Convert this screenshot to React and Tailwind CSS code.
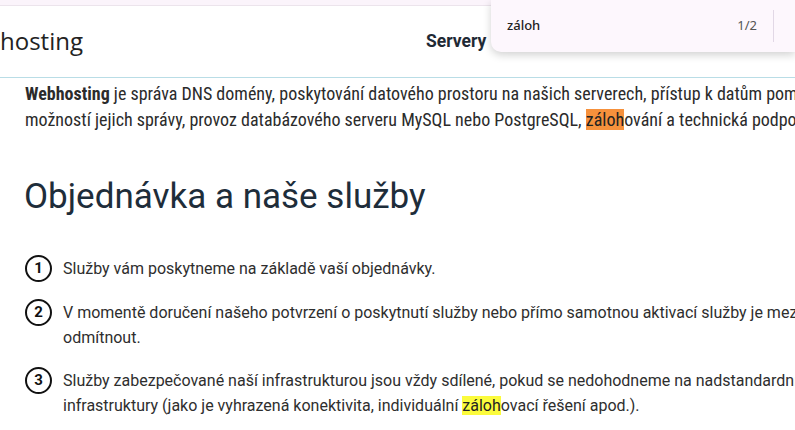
const items = [
  { n: 1, lines: ['Služby vám poskytneme na základě vaší objednávky.'] },
  {
    n: 2,
    lines: [
      'V momentě doručení našeho potvrzení o poskytnutí služby nebo přímo samotnou aktivací služby je mezi námi uzavřena smlouva, kterou nelze',
      'odmítnout.',
    ],
  },
]

export default function App() {
  return (
    <div className="relative w-[795px] h-[430px] overflow-hidden bg-white" style={{ fontFamily: 'Roboto, sans-serif' }}>
      {/* browser strip */}
      <div className="h-[6px] bg-[#fbf4fb] border-b border-[#ece4ec]" />

      {/* Header */}
      <header className="h-[72px] flex items-center border-b border-[#b9dde6]">
        <div className="w-[426px] text-[24px] text-[#222] leading-none pb-[2px]" style={{ fontFamily: '"Open Sans", sans-serif' }}>
          hosting
        </div>
        <div className="text-[17.5px] font-bold text-[#1f2a35]">Servery</div>
      </header>

      {/* Intro */}
      <div className="pl-[25px] pt-[3px] text-[18px] leading-[26px] text-[#2b2b2b] whitespace-nowrap"
        style={{ fontFamily: '"Liberation Sans Narrow", "Roboto Condensed", Roboto, sans-serif' }}>
        <p><b>Webhosting</b> je správa DNS domény, poskytování datového prostoru na našich serverech, přístup k datům pomocí FTP a SSH</p>
        <p>možností jejich správy, provoz databázového serveru MySQL nebo PostgreSQL, <mark className="bg-[#f6913c] text-[#222]">záloh</mark>ování a technická podpora.</p>
      </div>

      <h1 className="pl-[24px] mt-[42px] text-[35px] leading-[44px] text-[#1e2d3a]">Objednávka a naše služby</h1>

      <ol className="pl-[25px] mt-[37px] flex flex-col gap-[18px] text-[16px] leading-[25px] text-[#2e2e2e] whitespace-nowrap">
        {items.map(it => (
          <li key={it.n} className="flex gap-[11px]">
            <span className="shrink-0 w-[27px] h-[27px] -mt-[1px] rounded-full border-2 border-[#111] flex items-center justify-center text-[15px] font-bold text-[#111]">{it.n}</span>
            <div>
              {it.lines.map(l => <div key={l}>{l}</div>)}
            </div>
          </li>
        ))}
        <li className="flex gap-[11px]">
          <span className="shrink-0 w-[27px] h-[27px] -mt-[1px] rounded-full border-2 border-[#111] flex items-center justify-center text-[15px] font-bold text-[#111]">3</span>
          <div>
            <div>Služby zabezpečované naší infrastrukturou jsou vždy sdílené, pokud se nedohodneme na nadstandardním řešení</div>
            <div>infrastruktury (jako je vyhrazená konektivita, individuální <mark className="bg-[#fbfb3c] text-[#222]">záloh</mark>ovací řešení apod.).</div>
          </div>
        </li>
      </ol>

      {/* Find bar */}
      <div className="absolute top-0 left-[491px] right-0 h-[52px] bg-[#fdf7fd] rounded-bl-[10px] shadow-[0_3px_8px_rgba(0,0,0,0.18)] flex items-center"
        style={{ fontFamily: '"Noto Sans", sans-serif' }}>
        <span className="ml-[16px] text-[13px] font-medium text-[#222]">záloh</span>
        <span className="ml-auto text-[13px] text-[#555]">1/2</span>
        <div className="ml-[16px] mr-[21px] w-px h-[32px] bg-[#e2d8e6]" />
      </div>
    </div>
  )
}
